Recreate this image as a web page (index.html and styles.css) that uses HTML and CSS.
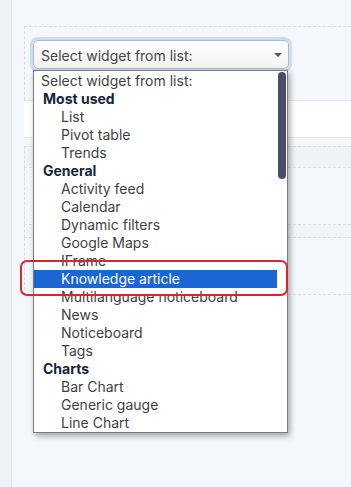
FILE: index.html
```html
<!DOCTYPE html>
<html lang="en">

<head>
    <meta charset="UTF-8">
    <meta name="viewport" content="width=device-width, initial-scale=1.0">
    <title>Select widget</title>
    <link rel="stylesheet" href="styles.css">
</head>

<body>
    <div class="side"></div>
    <div class="main">
        <div class="zone">
            <div class="select_box">
                <span>Select widget from list:</span>
                <span class="arrow"></span>
            </div>
        </div>
        <div class="white_bar"></div>
        <div class="band"></div>
        <div class="gap"></div>
        <div class="band2"></div>
        <div class="gap2"></div>
    </div>

    <div class="dropdown">
        <div class="rows">
            <div class="opt first">Select widget from list:</div>
            <div class="grp">Most used</div>
            <div class="opt">List</div>
            <div class="opt">Pivot table</div>
            <div class="opt">Trends</div>
            <div class="grp">General</div>
            <div class="opt">Activity feed</div>
            <div class="opt">Calendar</div>
            <div class="opt">Dynamic filters</div>
            <div class="opt">Google Maps</div>
            <div class="opt">IFrame</div>
            <div class="opt selected">Knowledge article</div>
            <div class="opt">Multilanguage noticeboard</div>
            <div class="opt">News</div>
            <div class="opt">Noticeboard</div>
            <div class="opt">Tags</div>
            <div class="grp">Charts</div>
            <div class="opt">Bar Chart</div>
            <div class="opt">Generic gauge</div>
            <div class="opt">Line Chart</div>
        </div>
        <div class="scroll">
            <div class="thumb"></div>
        </div>
    </div>

    <div class="mark"></div>
</body>
</html>
```

FILE: styles.css
```css
* {
    box-sizing: border-box;
}

body {
    margin: 0;
    height: 487px;
    display: flex;
    font-family: Inter, "Noto Sans", sans-serif;
    font-size: 14px;
    background-color: #f4f7fb;
    overflow: hidden;
}

.side {
    width: 12px;
    background-color: #eef1f6;
    border-right: 1px solid #dfe3ea;
}

.main {
    flex: 1;
    padding: 26px 0 0 12px;
}

.zone {
    height: 74px;
    border: 1px dashed #d9dee6;
    border-right: none;
    border-bottom: none;
    padding: 13px 0 0 8px;
}

.select_box {
    display: flex;
    align-items: center;
    justify-content: space-between;
    width: 256px;
    height: 29px;
    padding: 1px 6px 0 7px;
    border: 1px solid #a9b9d2;
    border-radius: 5px;
    background: linear-gradient(#ffffff, #f3f3f3);
    box-shadow: 0 0 0 3px #cddcf1;
    color: #444;
}

.arrow {
    width: 0;
    height: 0;
    border-left: 4px solid transparent;
    border-right: 4px solid transparent;
    border-top: 4px solid #555;
}

.white_bar {
    height: 38px;
    background-color: #ffffff;
    border-top: 1px solid #e1e5eb;
    border-bottom: 1px solid #e1e5eb;
}

.band {
    height: 22px;
    margin-top: 8px;
    background-color: #eef3f8;
    border-top: 1px dashed #d9dee6;
    border-bottom: 1px dashed #d9dee6;
    border-left: 1px dashed #d9dee6;
}

.gap {
    height: 56px;
    border-left: 1px dashed #d9dee6;
}

.band2 {
    height: 14px;
    background-color: #f1f5f9;
    border-top: 1px dashed #d9dee6;
    border-bottom: 1px dashed #d9dee6;
    border-left: 1px dashed #d9dee6;
}

.gap2 {
    height: 57px;
    border-left: 1px dashed #d9dee6;
    border-bottom: 1px dashed #d9dee6;
}

/* open select list */
.dropdown {
    position: absolute;
    left: 33px;
    top: 70px;
    width: 255px;
    height: 363px;
    display: flex;
    background-color: #fff;
    border: 1px solid #7b7b7b;
    box-shadow: 2px 3px 6px rgba(0, 0, 0, 0.35);
}

.rows {
    flex: 1;
    padding-top: 1px;
}

.opt,
.grp {
    height: 18px;
    line-height: 18px;
    white-space: nowrap;
}

.opt {
    padding-left: 27px;
    color: #3f3f3f;
}

.opt.first {
    padding-left: 7px;
}

.grp {
    padding-left: 9px;
    font-weight: 700;
    color: #15243a;
}

.selected {
    background-color: #1b66d2;
    color: #fff;
}

.scroll {
    width: 10px;
    padding: 1px 1px 0 1px;
}

.thumb {
    height: 107px;
    border-radius: 4px;
    background-color: #4a4c68;
}

.mark {
    position: absolute;
    left: 20px;
    top: 260px;
    width: 268px;
    height: 36px;
    border: 2px solid #d8282f;
    border-radius: 7px;
}
```
